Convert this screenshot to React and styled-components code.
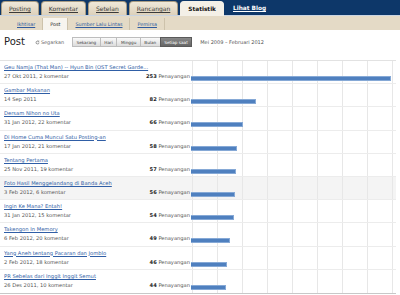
import React from "react";
import styled, { createGlobalStyle } from "styled-components";

const Global = createGlobalStyle`
  html, body { margin: 0; padding: 0; background: #fff; }
  body { font-family: "DejaVu Sans", Verdana, sans-serif; color: #333; }
  * { box-sizing: border-box; }
`;

const Page = styled.div`
  width: 400px;
  height: 295px;
  overflow: hidden;
  background: #fff;
`;

const TopBar = styled.div`
  height: 16px;
  background: #0d3769;
  border-bottom: 1px solid #c9d4e2;
  display: flex;
  align-items: flex-end;
  gap: 2px;
  padding-left: 1px;
`;

const Tab = styled.a`
  height: ${(p) => (p.$active ? "15px" : "14px")};
  margin-bottom: ${(p) => (p.$active ? "-1px" : "0")};
  padding: 0 7px;
  display: flex;
  align-items: center;
  border-radius: 4px 4px 0 0;
  font-size: ${(p) => (p.$active ? "5.8px" : "6px")};
  font-weight: ${(p) => (p.$active ? 700 : 400)};
  color: ${(p) => (p.$active ? "#111" : "#3a3a3a")};
  text-decoration: ${(p) => (p.$active ? "none" : "underline")};
  background: ${(p) =>
    p.$active ? "#f4f0e7" : "linear-gradient(#efe8d9, #ddd1bb)"};
  border: 1px solid ${(p) => (p.$active ? "#f4f0e7" : "#a99c83")};
  border-bottom: none;
  white-space: nowrap;
`;

const BlogLink = styled.a`
  margin-left: 7px;
  align-self: center;
  margin-bottom: -1px;
  font-size: 5.8px;
  font-weight: 700;
  color: #fff;
  text-decoration: underline;
  white-space: nowrap;
`;

const SubBar = styled.div`
  height: 14px;
  background: #e4dac6;
  display: flex;
  align-items: flex-end;
  padding-left: 10px;
`;

const SubTab = styled.a`
  height: 12px;
  padding: 0 7px;
  display: flex;
  align-items: center;
  font-size: 4.9px;
  color: ${(p) => (p.$active ? "#222" : "#2f5a9e")};
  text-decoration: ${(p) => (p.$active ? "none" : "underline")};
  background: ${(p) => (p.$active ? "#f7f4ee" : "transparent")};
  border-right: 1px solid #cdc2ab;
  border-left: ${(p) => (p.$active ? "1px solid #cdc2ab" : "none")};
  margin-left: ${(p) => (p.$active ? "-1px" : "0")};
  white-space: nowrap;
`;

const Toolbar = styled.div`
  display: flex;
  align-items: center;
  height: 10px;
  margin-top: 7px;
  padding-left: 4px;
`;

const Title = styled.h1`
  margin: 0 10px 0 0;
  font-size: 10px;
  font-weight: 400;
  color: #222;
  line-height: 10px;
`;

const Refresh = styled.a`
  display: flex;
  align-items: center;
  gap: 1px;
  font-size: 4.9px;
  color: #666;
  margin-right: 9px;
`;

const BtnGroup = styled.div`
  display: flex;
  height: 10px;
  margin-right: 8px;
`;

const Btn = styled.span`
  display: flex;
  align-items: center;
  padding: 0 3.5px;
  font-size: 4.2px;
  color: ${(p) => (p.$active ? "#fff" : "#444")};
  background: ${(p) =>
    p.$active ? "linear-gradient(#888, #666)" : "linear-gradient(#fafafa, #dcdcdc)"};
  border: 1px solid ${(p) => (p.$active ? "#5a5a5a" : "#bdbdbd")};
  margin-left: -1px;
  white-space: nowrap;
`;

const Range = styled.span`
  font-size: 5px;
  color: #555;
  white-space: nowrap;
`;

const Table = styled.div`
  margin-top: 13px;
  width: 396px;
  border-top: 1px solid #e2e2e2;
  border-bottom: 1px solid #c8c8c8;
`;

const Row = styled.div`
  display: grid;
  grid-template-columns: 191px 1fr;
  height: 23.2px;
  border-bottom: ${(p) => (p.$last ? "none" : "1px solid #ececec")};
  background: ${(p) => (p.$hl ? "#f4f4f4" : "transparent")};
`;

const Info = styled.div`
  padding: 2px 1px 0 4px;
  display: flex;
  flex-direction: column;
  font-size: 5.15px;
  line-height: 9px;
  min-width: 0;
`;

const PostLink = styled.a`
  color: #2f5ea6;
  text-decoration: underline;
  white-space: nowrap;
  overflow: hidden;
  font-size: 5.2px;
`;

const Meta = styled.div`
  display: flex;
  justify-content: space-between;
  color: #555;
  white-space: nowrap;
`;

const Views = styled.span`
  color: #555;
  b { color: #222; font-weight: 700; }
`;

const Chart = styled.div`
  padding-top: 15px;
  background-image: linear-gradient(
    to right,
    transparent 1px,
    #e7e7e7 1px,
    #e7e7e7 2px,
    transparent 2px
  );
  background-size: 25px 100%;
`;

const Bar = styled.div`
  height: 5px;
  background: #4f80bf;
  border: 1px solid #86a9d6;
  border-left: none;
`;

const RefreshIcon = () => (
  <svg width="5" height="5" viewBox="0 0 10 10">
    <path d="M8 5a3 3 0 1 1-1-2.2" fill="none" stroke="#777" strokeWidth="1.4" />
    <path d="M7.6 0.8v2.6H5" fill="none" stroke="#777" strokeWidth="1.2" />
  </svg>
);

const posts = [
  ["Geu Namja (That Man) -- Hyun Bin (OST Secret Garde...", "27 Okt 2011, 2 komentar", 253],
  ["Gambar Makanan", "14 Sep 2011", 82],
  ["Dersam Nihon no Uta", "31 Jan 2012, 22 komentar", 66],
  ["Di Home Cuma Muncul Satu Posting-an", "17 Jan 2012, 21 komentar", 58],
  ["Tentang Pertama", "25 Nov 2011, 19 komentar", 57],
  ["Foto Hasil Menggelandang di Banda Aceh", "3 Feb 2012, 6 komentar", 56],
  ["Ingin Ke Mana? Entah!", "31 Jan 2012, 15 komentar", 54],
  ["Takengon In Memory", "6 Feb 2012, 20 komentar", 49],
  ["Yang Aneh tentang Pacaran dan Jomblo", "2 Feb 2012, 18 komentar", 46],
  ["PR Sebelas dari Inggit Inggit Semut", "26 Des 2011, 10 komentar", 44],
];

export default function App() {
  return (
    <Page>
      <Global />
      <TopBar>
        <Tab>Posting</Tab>
        <Tab>Komentar</Tab>
        <Tab>Setelan</Tab>
        <Tab>Rancangan</Tab>
        <Tab $active>Statistik</Tab>
        <BlogLink>Lihat Blog</BlogLink>
      </TopBar>
      <SubBar>
        <SubTab>Ikhtisar</SubTab>
        <SubTab $active>Post</SubTab>
        <SubTab>Sumber Lalu Lintas</SubTab>
        <SubTab>Pemirsa</SubTab>
      </SubBar>
      <Toolbar>
        <Title>Post</Title>
        <Refresh>
          <RefreshIcon />
          Segarkan
        </Refresh>
        <BtnGroup>
          <Btn>Sekarang</Btn>
          <Btn>Hari</Btn>
          <Btn>Minggu</Btn>
          <Btn>Bulan</Btn>
          <Btn $active>Setiap saat</Btn>
        </BtnGroup>
        <Range>Mei 2009 – Februari 2012</Range>
      </Toolbar>
      <Table>
        {posts.map(([t, d, v], i) => (
          <Row key={i} $hl={i === 5} $last={i === posts.length - 1}>
            <Info>
              <PostLink>{t}</PostLink>
              <Meta>
                <span>{d}</span>
                <Views>
                  <b>{v}</b> Penayangan
                </Views>
              </Meta>
            </Info>
            <Chart>
              <Bar style={{ width: `${v * 0.789}px` }} />
            </Chart>
          </Row>
        ))}
      </Table>
    </Page>
  );
}
